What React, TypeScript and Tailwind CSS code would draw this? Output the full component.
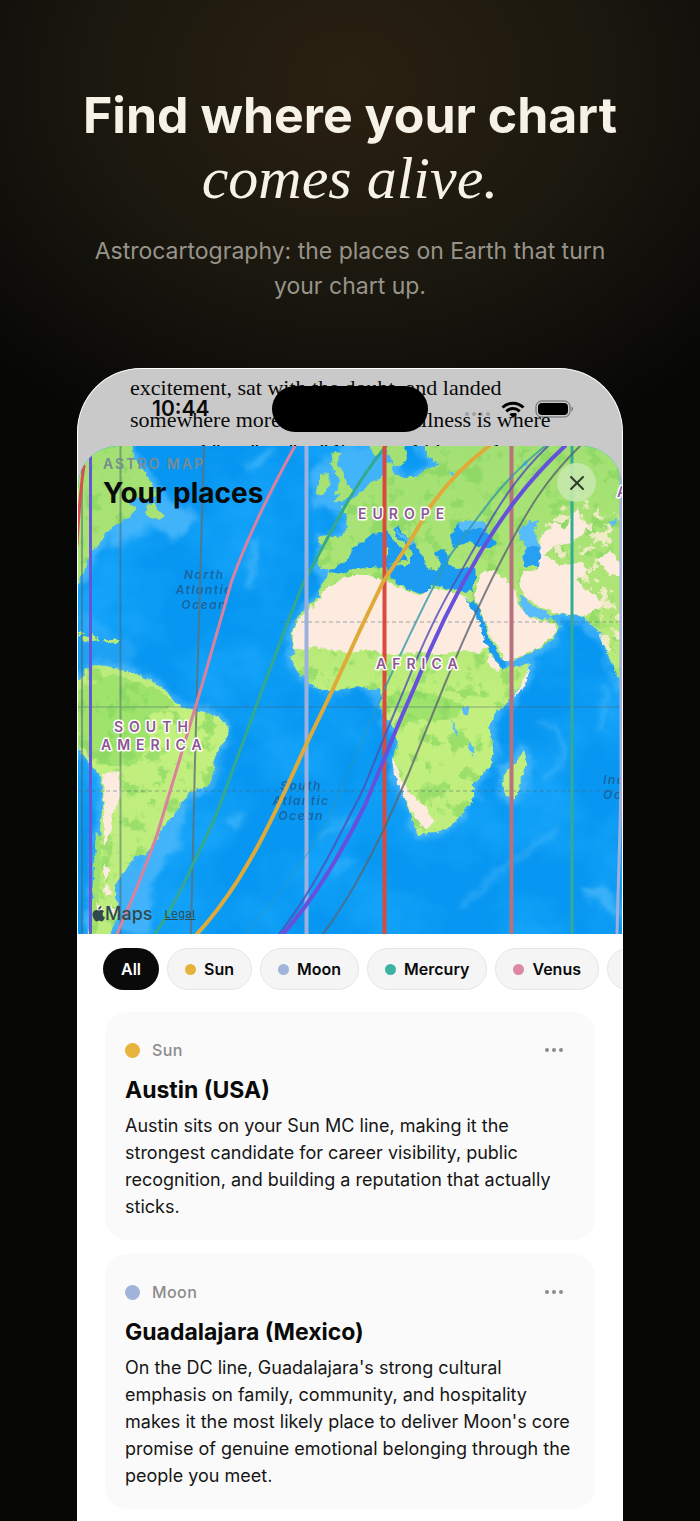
import { MoreHorizontal, X } from "lucide-react";

type Planet = { name: string; dot: string };
type Place = Planet & { title: string; text: string };

const planets: Planet[] = [
  { name: "Sun", dot: "bg-[#e6b33a]" },
  { name: "Moon", dot: "bg-[#a0b3d8]" },
  { name: "Mercury", dot: "bg-[#3bb3a0]" },
  { name: "Venus", dot: "bg-[#dc89a8]" },
  { name: "Mars", dot: "bg-[#d9483b]" },
];

const places: Place[] = [
  {
    name: "Sun",
    dot: "bg-[#e8b33c]",
    title: "Austin (USA)",
    text: "Austin sits on your Sun MC line, making it the strongest candidate for career visibility, public recognition, and building a reputation that actually sticks.",
  },
  {
    name: "Moon",
    dot: "bg-[#a0b3d8]",
    title: "Guadalajara (Mexico)",
    text: "On the DC line, Guadalajara's strong cultural emphasis on family, community, and hospitality makes it the most likely place to deliver Moon's core promise of genuine emotional belonging through the people you meet.",
  },
];

const northAmerica =
  "M60 430H130L134 456 141 468 150 480 157 495 148 500 138 497 128 503 137 508 130 516 118 524 108 531 100 543 91 552 85 568 78 584 60 600Z";
const newfoundland = "M147 505L155 503 158 510 164 516 160 520 145 514Z";
const southAmerica =
  "M60 668L80 680 85 670 95 664 115 668 130 671 150 680 166 690 174 702 183 707 200 711 216 715 226 723 229 732 222 745 214 758 213 775 207 787 190 793 178 808 163 828 153 845 146 854 132 858 130 866 118 879 115 895 119 912 108 940H88L93 900 97 860 100 830 103 800 101 776 90 765 78 748 60 730Z";
const eurasia =
  "M425 430L424 447 428 458 441 464 424 470 416 478 401 478 393 472 392 462 386 463 384 475 372 482 364 488 353 497 344 505 342 508 348 516 347 526 343 536 335 537 320 535 318 541 322 548 317 560 320 567 329 571 320 590 318 598 305 608 296 620 291 633 294 650 291 660 300 675 313 686 325 691 345 690 358 686 370 690 378 688 382 697 379 706 385 717 393 727 398 742 392 762 400 785 407 805 413 823 418 835 430 834 448 828 464 812 474 797 474 783 485 772 493 762 493 745 489 725 499 710 512 698 522 684 530 664 518 666 504 669 503 662 520 657 540 648 552 640 560 626 550 616 560 614 573 615 584 617 592 626 600 632 604 645 610 660 621 683 640 720V430Z";
const mediterranean =
  "M329 571L343 563 349 558 352 548 362 542 372 534 381 533 387 529 392 540 403 549 407 560 397 563 406 567 412 555 410 547 400 540 394 530 398 526 404 535 414 543 420 551 426 565 436 573 440 564 435 553 444 549 449 556 448 564 456 569 466 568 475 567 476 578 471 592 458 591 445 588 432 585 427 592 420 594 408 589 396 583 390 576 388 568 370 567 352 570 335 574Z";
const blackSea = "M450 535L458 523 468 524 478 528 484 521 487 533 497 542 492 548 478 546 468 542 453 548Z";
const caspian = "M517 532L529 521 538 521 534 532 541 547 539 567 524 567 522 557 526 548Z";
const persianGulf = "M519 595L526 597 533 607 545 610 551 617 548 620 538 618 528 617 521 607Z";
const redSea = "M465 597L471 603 474 600 481 614 489 637 499 655 506 662 504 670 497 662 485 642 479 620Z";
const britain = "M333 452L341 453 337 463 344 474 348 484 354 490 350 498 341 502 333 502 340 496 334 493 338 487 340 480 334 472 331 461Z";
const ireland = "M320 475L328 474 330 481 327 492 318 495 316 489 320 483Z";
const scandinavia = "M366 430L370 447 375 456 382 453 387 449 389 458 394 464 400 466 407 458 405 448 410 430Z";
const madagascar = "M523 750L527 760 521 781 515 799 506 798 503 785 506 769 516 762Z";
const caribbean = "M78 630L86 634 78 637ZM82 638L93 634 101 640 84 642ZM103 639H120L116 643 104 642Z";

const sahara =
  "M318 600L326 589 340 580 352 575 368 575 388 582 404 589 420 596 429 588 445 590 466 596 479 620 490 645 480 652 455 651 438 655 410 652 390 655 370 650 345 652 320 648 294 649 292 633 297 621Z";
const arabia =
  "M474 596L480 574 494 571 507 580 514 588 520 607 530 618 548 621 559 627 551 639 538 647 520 656 505 661 490 634Z";
const centralAsia =
  "M541 535L556 522 565 530 578 505 580 520 590 526 571 543 555 546 545 555 560 566 584 562 587 571 576 581 592 594 604 605 582 616 555 613 536 605 522 592 520 580 524 572 538 570Z";

const heavy = "fill-none stroke-[4px]";
const thick = "fill-none stroke-3";
const thin = "fill-none stroke-2 opacity-80";

function AstroMap() {
  return (
    <svg viewBox="78 446 544 488" className="block w-full font-['Inter',sans-serif]" role="img" aria-label="World map with planetary lines">
      <defs>
        <filter id="rough" x="-5%" y="-5%" width="110%" height="110%" colorInterpolationFilters="sRGB">
          <feTurbulence type="fractalNoise" baseFrequency="0.16" numOctaves="3" seed="7" />
          <feDisplacementMap in="SourceGraphic" scale="6" xChannelSelector="R" yChannelSelector="G" />
        </filter>
        <filter id="shelf" x="-10%" y="-10%" width="120%" height="120%" colorInterpolationFilters="sRGB">
          <feGaussianBlur stdDeviation="3" result="b" />
          <feTurbulence type="fractalNoise" baseFrequency="0.05" numOctaves="3" seed="3" result="n" />
          <feDisplacementMap in="b" in2="n" scale="16" xChannelSelector="R" yChannelSelector="G" />
        </filter>
        <filter id="seaTone" x="0" y="0" width="100%" height="100%" colorInterpolationFilters="sRGB">
          <feTurbulence type="fractalNoise" baseFrequency="0.014" numOctaves="4" seed="11" />
          <feColorMatrix values="0 0 0 0 0.12  0 0 0 0 0.68  0 0 0 0 1  2.6 0 0 0 -1.0" />
        </filter>
        <filter id="landTone" x="0" y="0" width="100%" height="100%" colorInterpolationFilters="sRGB">
          <feTurbulence type="fractalNoise" baseFrequency="0.06" numOctaves="4" seed="5" />
          <feColorMatrix values="0 0 0 0 0.53  0 0 0 0 0.84  0 0 0 0 0.38  0 9 0 0 -5" />
          <feComposite in2="SourceGraphic" operator="in" />
        </filter>
        <filter id="dryTone" x="0" y="0" width="100%" height="100%" colorInterpolationFilters="sRGB">
          <feTurbulence type="fractalNoise" baseFrequency="0.09" numOctaves="4" seed="21" />
          <feColorMatrix values="0 0 0 0 0.99  0 0 0 0 0.93  0 0 0 0 0.83  0 0 14 0 -7.8" />
          <feComposite in2="SourceGraphic" operator="in" />
        </filter>
        <linearGradient id="landFill" gradientUnits="userSpaceOnUse" x1="0" y1="446" x2="0" y2="934">
          <stop offset="0" stopColor="#a3e074" />
          <stop offset="0.3" stopColor="#aee576" />
          <stop offset="0.55" stopColor="#c3f07e" />
          <stop offset="1" stopColor="#bcec7e" />
        </linearGradient>
        <clipPath id="mapBounds">
          <rect x="78" y="446" width="544" height="488" />
        </clipPath>
      </defs>
      <g clipPath="url(#mapBounds)">
        <rect x="78" y="446" width="544" height="488" fill="#0796f1" />
        <rect x="78" y="446" width="544" height="488" filter="url(#seaTone)" opacity="0.6" />
        <g filter="url(#shelf)" fill="#4fb9fb" stroke="#4fb9fb" strokeWidth="9" opacity="0.8">
          <path d={northAmerica} />
          <path d={southAmerica} />
          <path d={eurasia} />
          <path d={madagascar} />
          <path d="M120 520L150 480 170 500 198 518 176 538 155 528 110 545Z" strokeWidth="2" />
          <path d="M312 470L350 446H400V480L340 515 312 505Z" strokeWidth="2" />
          <path d="M155 850L190 800 175 850 150 880 150 935H108L120 880Z" strokeWidth="2" />
          <path d="M78 610L115 635 135 650 130 665 78 665Z" strokeWidth="0" opacity="0.4" />
        </g>
        <g filter="url(#shelf)" stroke="#78cdfc" fill="none" strokeWidth="4" opacity="0.45">
          <path d="M538 722L554 728 566 745 560 765 545 783M607 684L606 705 601 731M460 910L490 880 530 850 560 825M320 840L350 815M330 870L355 860" />
          <path d="M586 895L600 890 612 905 618 918" strokeWidth="12" />
          <path d="M245 470L275 450M255 540L250 585M225 820H245" strokeWidth="7" />
        </g>
        <g filter="url(#rough)">
          <g fill="url(#landFill)">
            <path d={northAmerica} />
            <path d={newfoundland} />
            <path d={southAmerica} />
            <path d={eurasia} />
            <path d={britain} />
            <path d={ireland} />
            <path d={scandinavia} />
            <path d={madagascar} />
            <path d={caribbean} />
          </g>
          <g fill="#9fe36c">
            <path d="M78 690L110 674 160 690 175 705 150 715 150 745 135 765 105 765 78 745Z" />
            <path d="M385 696L410 690 440 695 465 705 455 718 430 722 400 715Z" />
            <path d="M96 830L101 842 100 880 97 933H90Z" />
          </g>
          <g filter="url(#landTone)" opacity="0.65">
            <path d={northAmerica} />
            <path d={southAmerica} />
            <path d={eurasia} />
          </g>
          <path d="M545 525L580 490 640 530V700L600 640 590 590 545 570Z" filter="url(#dryTone)" opacity="0.85" />
          <g fill="#fdebe0">
            <path d={sahara} />
            <path d={arabia} />
            <path d={centralAsia} />
            <path d="M103 773L119 772 121 796 113 812 110 835 104 846 104 800Z" />
            <path d="M392 756L399 775 412 795 427 808 434 822 426 829 416 820 404 796 394 776Z" />
            <path d="M103 865L112 870 104 882 113 893 106 898ZM96 900L104 912 98 918ZM110 905L116 910 112 918Z" />
            <path d="M489 652L501 668 497 673 487 662ZM520 687L530 665 526 685 512 700Z" />
            <path d="M598 560L610 550 622 565V578L608 573Z" />
          </g>
          <g fill="#1b9bf2">
            <path d={mediterranean} />
            <path d={blackSea} />
            <path d={redSea} />
          </g>
          <g fill="#58bbfa">
            <path d={persianGulf} />
            <path d={caspian} />
            <path d="M458 523L470 522 484 521 486 532 478 527 461 531ZM394 528L404 536 414 543 410 545 400 537Z" />
            <path d="M463 707L470 706 468 714 463 715ZM452 718L456 727 459 737 455 733ZM470 740L474 748 473 757 469 748Z" />
            <path d="M448 470L455 473 452 476ZM520 468L526 460 527 466ZM608 522L618 520 612 526Z" />
          </g>
          <path d="M528 546L540 548 539 567 524 567 523 557Z" fill="#279ff2" />
          <path d="M389 564L400 562 408 560 404 566ZM384 547L388 546 388 556 384 557Z" fill="#a9e36f" />
        </g>
        <g stroke="#4b6272" fill="none" opacity="0.5">
          <path d="M78 707H622" strokeWidth="1" />
          <path d="M280 622H622M78 791H622" strokeWidth="1" strokeDasharray="4 3" />
          <path d="M82 446V934M120.500 446V934" strokeWidth="2" />
        </g>
        <g fill="#1f5888" fontSize="12" fontStyle="italic" fontWeight="600" letterSpacing="1.500" textAnchor="middle" opacity="0.8">
          <text x="204" y="579">North</text>
          <text x="204" y="594">Atlantic</text>
          <text x="204" y="609">Ocean</text>
          <text x="301" y="790">South</text>
          <text x="301" y="805">Atlantic</text>
          <text x="301" y="820">Ocean</text>
          <text x="603" y="784" textAnchor="start">Indian</text>
          <text x="603" y="799" textAnchor="start">Ocean</text>
        </g>
        <g strokeLinecap="round">
          <path className={thick} stroke="#6655d8" d="M90.500 446V934" />
          <path className={thick} stroke="#d84f52" d="M84 466C80 490 79 510 77 545" />
          <path className={thin} stroke="#5e7077" d="M204 446L197 690 195 760 191 934" />
          <path className={thick} stroke="#dc809f" d="M295 446C265 500 245 545 232 580L202 685 184 745 157 835C145 868 130 905 117 934" />
          <path className={thick} stroke="#35a98d" d="M386 446C350 490 330 535 305 580 288 618 276 655 264 685L228 783C215 820 205 840 194 862 180 893 168 915 155 934" />
          <path className={heavy} stroke="#9db1de" d="M306.500 446V934" />
          <path className={heavy} stroke="#d94a3e" d="M384.500 446V934" />
          <path className={heavy} stroke="#e0aa3a" d="M489 446C460 468 442 490 430 507L409 543 383 582 360 630 333 689 305 747 285 791C260 845 250 860 238 880 222 905 210 920 197 934" />
          <path className={heavy} stroke="#b8717f" d="M511.500 446V934" />
          <path className={thick} stroke="#35ab94" d="M572 446V934" />
          <path className={thin} stroke="#3599aa" d="M545 446C500 482 480 515 451 554 425 600 405 645 385 688" />
          <path className="fill-none stroke-1 opacity-80" stroke="#3599aa" d="M385 688L363 738 327 822C308 855 280 895 245 934" />
          <path className={thin} stroke="#4f4fb4" d="M548 446C510 482 490 520 458 577 435 615 420 650 406 685L383 740 363 790 332 850C315 882 298 910 279 934" />
          <path className={heavy} stroke="#6651dc" d="M565 446C525 483 500 520 480 553 455 595 435 635 415 686L398 725 385 757 365 805C340 856 315 898 283 934" />
          <path className={thin} stroke="#5b6470" d="M580 446C545 480 527 512 511 542 485 590 465 635 444 686L408 775 385 827C365 868 348 900 323 934" />
          <path className={thick} stroke="#a1aedb" d="M621 446V780C620 840 618 890 617 934" />
        </g>
        <g fill="#8e5593" stroke="#ffffff" strokeWidth="3" strokeLinejoin="round" paintOrder="stroke" fontSize="14" fontWeight="600" letterSpacing="6">
          <text x="358" y="519">EUROPE</text>
          <text x="376" y="669">AFRICA</text>
          <text x="114" y="732">SOUTH</text>
          <text x="101" y="750">AMERICA</text>
          <text x="617" y="497">ASIA</text>
        </g>
      </g>
    </svg>
  );
}

function AppleLogo() {
  return (
    <svg viewBox="0 0 14 17" className="mb-[2px] h-[17px] w-[14px] fill-current" aria-hidden="true">
      <path d="M11.600 9c0-1.800 1.400-2.600 1.500-2.700-.9-1.200-2.200-1.400-2.600-1.400-1.100-.1-2.200.7-2.700.7-.6 0-1.400-.7-2.400-.6C4.100 5 3 5.700 2.300 6.800c-1.400 2.300-.4 5.800 1 7.700.6.900 1.400 2 2.400 1.900 1 0 1.300-.6 2.500-.6 1.100 0 1.400.6 2.500.6 1 0 1.700-.9 2.300-1.900.5-.7.700-1.100 1-1.900-2.400-.9-2.400-3.500-2.400-3.600zM9.600 3.500c.6-.7.900-1.600.8-2.500-.8 0-1.700.5-2.300 1.200-.5.600-.9 1.500-.8 2.400.9.100 1.800-.4 2.300-1.100z" />
    </svg>
  );
}

function StatusBar() {
  return (
    <div className="absolute inset-x-0 top-[17px] grid h-[46px] grid-cols-[1fr_156px_1fr] items-center">
      <span className="pl-[74px] text-[21px] font-semibold">10:44</span>
      <span className="h-[46px] rounded-full bg-black" />
      <span className="flex items-center gap-[10px] pl-[37px]">
        <svg viewBox="0 0 26 4" className="mt-[10px] h-1 w-[26px] fill-black/20" aria-hidden="true">
          <circle cx="2" cy="2" r="2" />
          <circle cx="9" cy="2" r="2" />
          <circle cx="16" cy="2" r="2" />
          <circle cx="23" cy="2" r="2" />
        </svg>
        <svg viewBox="0 0 24 17" className="h-[17px] w-6 fill-none stroke-black" strokeWidth="3" aria-hidden="true">
          <path d="M1.500 6.500C7.500.7 16.500.7 22.500 6.500M5.300 10.300C9.200 6.700 14.800 6.700 18.700 10.300" />
          <path d="M12 17L8.300 13.300C10.300 11.600 13.700 11.600 15.700 13.300Z" className="fill-black stroke-none" />
        </svg>
        <svg viewBox="0 0 39 18" className="h-[18px] w-[39px]" aria-hidden="true">
          <rect x="1" y="1" width="34" height="16" rx="5.500" className="fill-none stroke-black/50" />
          <rect x="3" y="3" width="30" height="12" rx="4" />
          <path d="M36.500 6.500C38.300 7.300 38.300 10.700 36.500 11.500Z" className="fill-black/50" />
        </svg>
      </span>
    </div>
  );
}

export default function App() {
  return (
    <main className="flex min-h-screen flex-col items-center overflow-hidden bg-[#050505] bg-[radial-gradient(ellipse_500px_400px_at_50%_80px,#2b2011,#1b180f_50%,#070706)] font-['Inter',sans-serif] text-[#0a0a0a]">
      <header className="flex flex-col items-center px-20 pt-[84px] text-center">
        <h1 className="text-[50px] leading-[63px] font-bold whitespace-nowrap text-[#f7f2e7]">
          Find where your chart
          <em className="block font-['Liberation_Serif',serif] text-[60px] font-normal">comes alive.</em>
        </h1>
        <p className="mt-[24px] text-[23px] leading-[35px] text-[#98948a]">
          Astrocartography: the places on Earth that turn
          <br />
          your chart up.
        </p>
      </header>

      <div className="relative mt-[64px] flex w-[78%] flex-1 flex-col overflow-hidden rounded-t-[64px] border border-b-0 border-white bg-[#c9c9c9]">
        <div className="h-[77px] overflow-hidden pl-[52px] pt-[3px] font-['Liberation_Serif',serif] text-[22px] leading-[32px] whitespace-nowrap">
          <p>excitement, sat with the doubt, and landed</p>
          <p>somewhere more honest. That stillness is where</p>
          <p>you read "yes" or "no" lines, and it's worth</p>
        </div>
        <StatusBar />

        <section className="relative flex-1 rounded-t-[40px] bg-white">
          <div className="relative overflow-hidden rounded-t-[40px]">
            <AstroMap />
            <div className="absolute top-[10px] left-[25px]">
              <p className="text-[14px] leading-[16px] font-semibold tracking-[2px] text-[#788b92]">ASTRO MAP</p>
              <h2 className="mt-1 text-[28px] leading-[34px] font-bold">Your places</h2>
            </div>
            <button type="button" aria-label="Close" className="absolute top-[17px] right-[26px] flex size-[39px] items-center justify-center rounded-full bg-[#c6e8ab]/90 text-[#303a2c]">
              <X className="size-[24px]" strokeWidth={2} />
            </button>
            <div className="absolute bottom-2 left-[13px] flex items-center text-[#2f4a4c]">
              <AppleLogo />
              <span className="text-[18px] leading-[24px] font-medium">Maps</span>
              <a href="#legal" className="ml-3 text-[11px] tracking-wider underline">Legal</a>
            </div>
          </div>

          <nav className="flex gap-2 overflow-hidden pt-[14px] pl-[25px] text-[16px] font-semibold">
            <button type="button" className="h-[42px] shrink-0 rounded-full bg-[#0a0a0a] px-[18px] text-white">All</button>
            {planets.map((p) => (
              <button key={p.name} type="button" className="flex h-[42px] shrink-0 items-center gap-2 rounded-full border border-[#e6e6e6] bg-[#f5f5f5] px-[17px]">
                <span className={`size-[11px] rounded-full ${p.dot}`} />
                {p.name}
              </button>
            ))}
          </nav>

          <div className="mt-[22px] flex flex-col gap-[14px] px-[27px] pb-[14px]">
            {places.map((p) => (
              <article key={p.title} className="rounded-[22px] bg-[#fafafa] px-[20px] pt-[24px] pb-[20px]">
                <div className="flex h-[28px] items-center gap-3 text-[16px] font-medium tracking-wide text-[#8b8b8b]">
                  <span className={`size-[15px] rounded-full ${p.dot}`} />
                  {p.name}
                  <button type="button" aria-label={`More about ${p.title}`} className="mr-[9px] ml-auto">
                    <MoreHorizontal className="size-6 fill-current" />
                  </button>
                </div>
                <h3 className="mt-[10px] text-[23px] leading-[32px] font-bold">{p.title}</h3>
                <p className="mt-[6px] text-[18px] leading-[27px] text-[#161616]">{p.text}</p>
              </article>
            ))}
          </div>
        </section>
      </div>
    </main>
  );
}
